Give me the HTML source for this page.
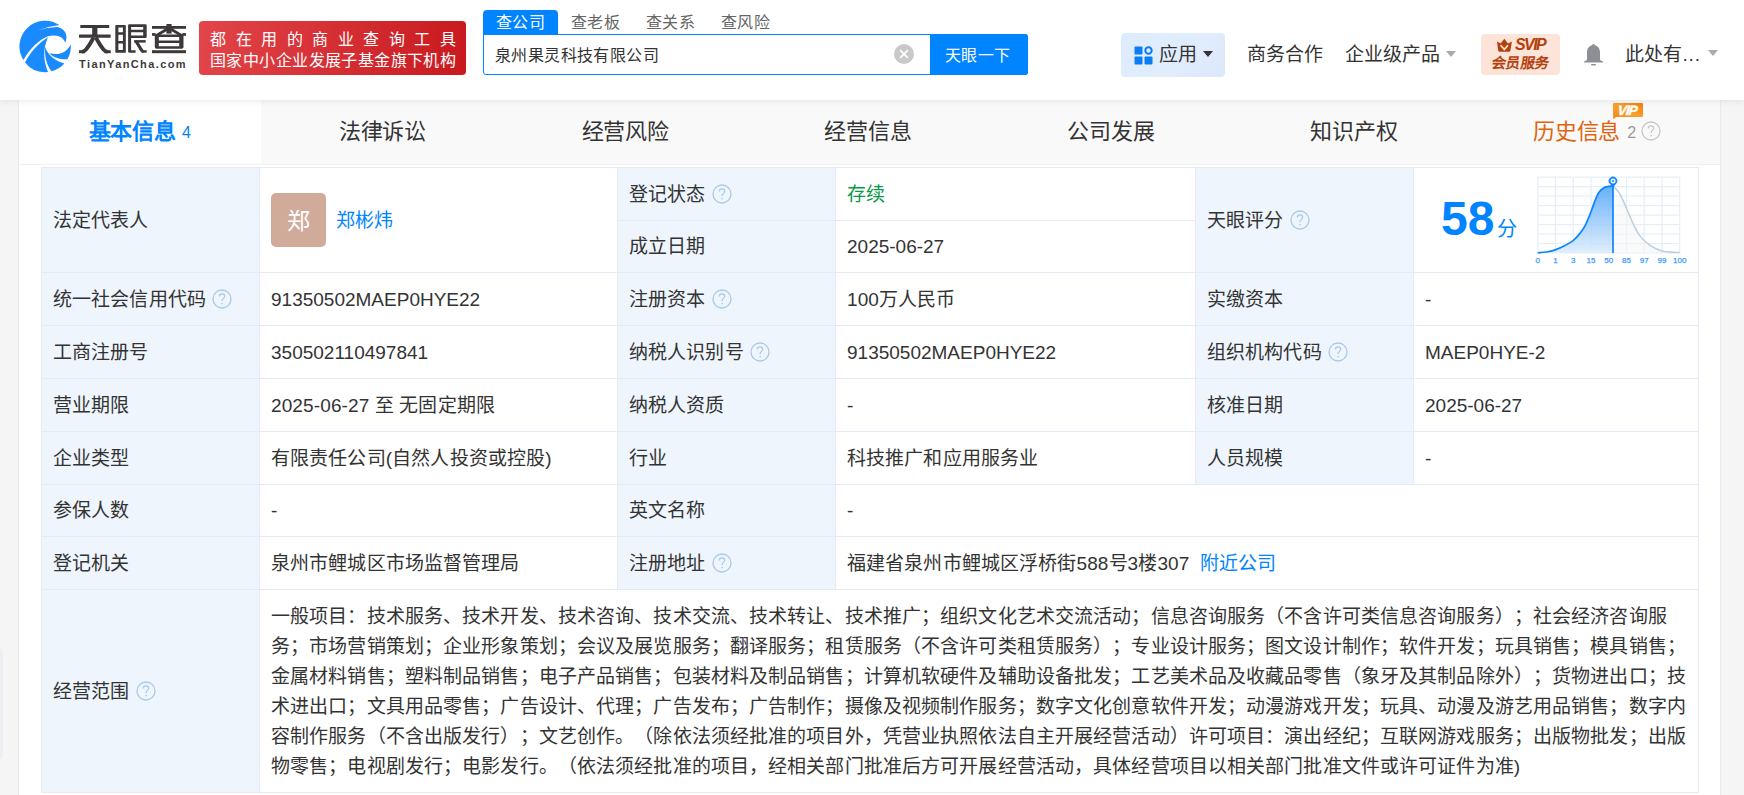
<!DOCTYPE html>
<html lang="zh-CN"><head><meta charset="utf-8">
<style>
*{box-sizing:border-box;margin:0;padding:0}
html,body{width:1744px;height:795px;overflow:hidden;text-spacing-trim:space-all;background:#f5f5f5;font-family:"Liberation Sans",sans-serif;color:#333}
.a{position:absolute;white-space:nowrap}
#hdr{position:absolute;left:0;top:0;width:1744px;height:100px;background:#fff;box-shadow:0 2px 6px rgba(0,0,0,.07);z-index:5}
</style></head><body>
<div id="hdr">
  <svg class="a" style="left:17px;top:18px" width="56" height="56" viewBox="0 0 795 795">
    <g fill="#1a8bff">
    <path d="M88.8,593.8 A365,365 0 0 1 601,98.3 Q430,118 280,180 Q420,132 570,128 C670,150 735,230 685,350 C665,280 580,225 440,258 C300,315 180,440 95,590 Z"/>
    <path d="M440,272 C300,360 190,480 114.5,630.4 A365,365 0 0 0 440.1,765.8 C380,620 360,450 440,272 Z"/>
    <path d="M400,410 C390,520 410,650 489.8,756.8 A365,365 0 0 0 672.7,645.6 C560,610 440,540 400,410 Z"/>
    <path d="M460,500 C520,560 600,590 715.7,586.3 A365,365 0 0 0 763.7,372.1 C720,470 620,540 460,500 Z"/>
    </g>
  </svg>
  <svg class="a" style="left:76px;top:20px" width="114" height="36" viewBox="76 20 114 36"><g fill="#3d3939"><rect x="80.3" y="25" width="28.9" height="3" rx=".3"/><rect x="92.2" y="27" width="5.2" height="8.5"/><rect x="79" y="34.6" width="31.7" height="3.2" rx=".3"/><rect x="79" y="50.2" width="6" height="3" /><rect x="104.6" y="50.2" width="6.1" height="3"/></g><g fill="none" stroke="#3d3939" stroke-width="3.8" stroke-linejoin="round"><path d="M93.6,37.5 C91.5,41.5 88.5,46.5 86,49.5 C84.8,51 83.8,51.7 82,51.7"/><path d="M95.9,37.5 C98,41.5 101,46.5 103.5,49.5 C104.7,51 105.7,51.7 107.5,51.7"/></g><g fill="#3d3939"><path fill-rule="evenodd" d="M116.2,25 L125,25 Q125.8,25 125.8,25.8 L125.8,52.7 L116.2,52.7 Q115.3,52.7 115.3,51.8 L115.3,25.9 Q115.3,25 116.2,25 Z M118.4,27.6 L118.4,32.2 L122.9,32.2 L122.9,27.6 Z M118.4,34.7 L118.4,41 L122.9,41 L122.9,34.7 Z M118.4,43.5 L118.4,50.1 L122.9,50.1 L122.9,43.5 Z"/><path fill-rule="evenodd" d="M129.2,24.3 L145.5,24.3 Q146.7,24.3 146.7,25.5 L146.7,36.7 Q146.7,37.9 145.5,37.9 L131.1,37.9 L131.1,50.2 L135.6,50.2 L135.6,52.7 L129.2,52.7 Q128.1,52.7 128.1,51.6 L128.1,25.4 Q128.1,24.3 129.2,24.3 Z M131.1,27 L131.1,29.8 L143.2,29.8 L143.2,27 Z M131.1,32.3 L131.1,35.6 L143.2,35.6 L143.2,32.3 Z"/><rect x="134.1" y="40.1" width="11.6" height="2.5"/><rect x="141.6" y="50.2" width="5.1" height="2.5"/></g><path d="M136.2,41.5 L140.5,48.5 C141.3,49.8 142,51.45 143.5,51.45" fill="none" stroke="#3d3939" stroke-width="3.3"/><g fill="#3d3939"><rect x="152" y="26" width="34" height="2.8"/><rect x="166.4" y="24" width="5.2" height="9.6"/><rect x="152" y="33.1" width="3.6" height="2.7"/><rect x="182.3" y="33.1" width="3.7" height="2.7"/><path d="M166.5,27.8 L168.6,29.9 L159.5,35.3 L154.2,35.3 Z"/><path d="M171.5,27.8 L169.4,29.9 L178.5,35.3 L183.8,35.3 Z"/><path fill-rule="evenodd" d="M154.8,34.6 L183.5,34.6 L183.5,47 Q183.5,48.7 181.8,48.7 L156.5,48.7 Q154.8,48.7 154.8,47 Z M158.8,36.9 L158.8,40.4 L179.2,40.4 L179.2,36.9 Z M158.8,42.9 L158.8,46.2 L179.2,46.2 L179.2,42.9 Z"/><rect x="152" y="50.2" width="34" height="3"/></g></svg>
  <div class="a" style="left:79px;top:57px;font-size:11px;line-height:14px;font-weight:bold;color:#3d3a3a;letter-spacing:1.4px">TianYanCha.com</div>
  <div class="a" style="left:199px;top:21px;width:267px;height:54px;border-radius:4px;background:linear-gradient(100deg,#e2454a,#c8191e)"></div>
  <div class="a" style="left:210px;top:28.5px;font-size:16px;line-height:22px;color:#fff;letter-spacing:9.5px">都在用的商业查询工具</div>
  <div class="a" style="left:210px;top:49.5px;font-size:16px;line-height:22px;color:#fff;letter-spacing:.42px">国家中小企业发展子基金旗下机构</div>

  <div class="a" style="left:483px;top:10px;width:75px;height:25px;background:#0084ff;border-radius:4px 4px 0 0"></div>
  <div class="a" style="left:496px;top:11px;font-size:16px;letter-spacing:.39px;line-height:24px;color:#fff">查公司</div>
  <div class="a" style="left:571px;top:11px;font-size:16px;letter-spacing:.39px;line-height:24px;color:#666">查老板</div>
  <div class="a" style="left:646px;top:11px;font-size:16px;letter-spacing:.39px;line-height:24px;color:#666">查关系</div>
  <div class="a" style="left:721px;top:11px;font-size:16px;letter-spacing:.39px;line-height:24px;color:#666">查风险</div>
  <div class="a" style="left:483px;top:34px;width:545px;height:41px;border:1px solid #0084ff;border-radius:0 3px 3px 3px;background:#fff"></div>
  <div class="a" style="left:495px;top:43px;font-size:16px;letter-spacing:.39px;line-height:26px;color:#333">泉州果灵科技有限公司</div>
  <div class="a" style="left:894px;top:44px;width:20px;height:20px;border-radius:50%;background:#c9c9c9"></div>
  <svg class="a" style="left:894px;top:44px" width="20" height="20" viewBox="0 0 20 20"><path d="M6.2,6.2 L13.8,13.8 M13.8,6.2 L6.2,13.8" stroke="#fff" stroke-width="1.8"/></svg>
  <div class="a" style="left:930px;top:34px;width:98px;height:41px;background:#0084ff;border-radius:0 3px 3px 0"></div>
  <div class="a" style="left:945px;top:43px;font-size:16px;letter-spacing:.39px;line-height:26px;color:#fff">天眼一下</div>

  <div class="a" style="left:1121px;top:33px;width:104px;height:44px;border-radius:4px;background:linear-gradient(135deg,#ddecfe,#e1edfd 60%,#dbe8fb)"></div>
  <svg class="a" style="left:1133.5px;top:46px" width="20" height="20" viewBox="0 0 20 20"><g fill="#0a7cf4"><rect x="0.5" y="0.5" width="8" height="8" rx="1"/><rect x="0.5" y="10.5" width="8" height="8" rx="1"/><rect x="10.5" y="10.5" width="8" height="8" rx="1"/></g><circle cx="14.5" cy="4.5" r="3.2" fill="none" stroke="#0a7cf4" stroke-width="2"/></svg>
  <div class="a" style="left:1159px;top:40px;font-size:19px;letter-spacing:.12px;line-height:30px;color:#333">应用</div>
  <div class="a" style="left:1203px;top:51px;width:0;height:0;border-left:5px solid transparent;border-right:5px solid transparent;border-top:6px solid #333"></div>
  <div class="a" style="left:1247px;top:40px;font-size:19px;letter-spacing:.12px;line-height:30px;color:#333">商务合作</div>
  <div class="a" style="left:1345px;top:40px;font-size:19px;letter-spacing:.12px;line-height:30px;color:#333">企业级产品</div>
  <div class="a" style="left:1446px;top:51px;width:0;height:0;border-left:5px solid transparent;border-right:5px solid transparent;border-top:6px solid #aaa"></div>

  <div class="a" style="left:1481px;top:34px;width:79px;height:41px;border-radius:4px;background:#fde4d9"></div>
  <div class="a" style="left:1490px;top:52px;font-size:14.4px;line-height:22px;font-weight:bold;color:#b3410e;transform:skewX(-9deg);transform-origin:0 100%;letter-spacing:.35px">会员服务</div>
  <div class="a" style="left:1515px;top:35px;font-size:16px;line-height:19px;font-weight:bold;font-style:italic;color:#b3410e;letter-spacing:-1.6px">SVIP</div>
  <svg class="a" style="left:1496px;top:38px" width="17" height="15" viewBox="0 0 17 15"><path d="M1,3.6 L4.6,5.6 L8.3,0.8 L12,5.6 L15.9,3.6 L14.4,12.6 Q14.2,13.8 13,13.8 L3.6,13.8 Q2.4,13.8 2.2,12.6 Z" fill="#b3410e"/><path d="M4.6,7.2 L8.3,11.4 L12,7.2" fill="none" stroke="#fde4da" stroke-width="1.7"/></svg>

  <svg class="a" style="left:1583px;top:43px" width="21" height="23" viewBox="0 0 21 23"><path d="M10.5,1 C11.3,1 11.8,1.6 11.8,2.3 C15.2,3 17,6 17,9.5 L17,16 C17,17 18,18 20,18.6 L20,19.6 L1,19.6 L1,18.6 C3,18 4,17 4,16 L4,9.5 C4,6 5.8,3 9.2,2.3 C9.2,1.6 9.7,1 10.5,1 Z" fill="#8c9096"/><rect x="8" y="21" width="5" height="1.6" rx=".8" fill="#8c9096"/></svg>
  <div class="a" style="left:1625px;top:40px;font-size:19px;letter-spacing:.12px;line-height:30px;color:#333">此处有<span style="letter-spacing:.9px">...</span></div>
  <div class="a" style="left:1708px;top:50px;width:0;height:0;border-left:5px solid transparent;border-right:5px solid transparent;border-top:6px solid #aaa"></div>
</div>

<div class="a" style="left:19px;top:100px;width:1701px;height:695px;background:#fff;box-shadow:-1px 0 1px rgba(0,0,0,.04),1px 0 1px rgba(0,0,0,.04)"></div>
<div class="a" style="left:-10px;top:647px;width:12.5px;height:113px;border-radius:6px;background:#eceef2"></div>
<div class="a" style="left:261px;top:100px;width:1459px;height:64px;background:#f9f9f9"></div>
<div class="a" style="left:19px;top:164px;width:1701px;height:1px;background:#f0f0f0"></div>
<div class="a" style="left:18.3px;top:100px;width:242.8px;height:64px;line-height:64px;text-align:center;font-size:22px;letter-spacing:-.15px;font-weight:bold;color:#0084ff"><span>基本信息</span><span style="font-size:16px;font-weight:normal;margin-left:6px;position:relative;top:-1px">4</span></div>
<div class="a" style="left:261.1px;top:100px;width:242.8px;height:64px;line-height:64px;text-align:center;font-size:22px;letter-spacing:-.15px;color:#333">法律诉讼</div>
<div class="a" style="left:503.9px;top:100px;width:242.8px;height:64px;line-height:64px;text-align:center;font-size:22px;letter-spacing:-.15px;color:#333">经营风险</div>
<div class="a" style="left:746.7px;top:100px;width:242.8px;height:64px;line-height:64px;text-align:center;font-size:22px;letter-spacing:-.15px;color:#333">经营信息</div>
<div class="a" style="left:989.5px;top:100px;width:242.8px;height:64px;line-height:64px;text-align:center;font-size:22px;letter-spacing:-.15px;color:#333">公司发展</div>
<div class="a" style="left:1232.3px;top:100px;width:242.8px;height:64px;line-height:64px;text-align:center;font-size:22px;letter-spacing:-.15px;color:#333">知识产权</div>
<div class="a" style="left:1475.1px;top:100px;width:242.8px;height:64px;line-height:64px;text-align:center;font-size:22px;letter-spacing:-.15px;color:#e0640f"><span style="margin-left:4px">历史信息</span><span style="font-size:16px;color:#999;margin-left:7px;position:relative;top:-1px">2</span><span style="display:inline-block;width:28px"></span></div>
<svg class="a" style="left:1640.5px;top:120.5px" width="20" height="20" viewBox="0 0 20 20"><circle cx="10" cy="10" r="9" fill="none" stroke="#c3c7cc" stroke-width="1.3"/><path d="M7.3,7.6 C7.3,5.9 8.5,4.9 10,4.9 C11.6,4.9 12.7,5.9 12.7,7.3 C12.7,9.3 10.1,9.4 10.1,11.6 L10.1,12.3" fill="none" stroke="#c3c7cc" stroke-width="1.2"/><rect x="9.4" y="14" width="1.4" height="1.3" fill="#c3c7cc"/></svg>
<svg class="a" style="left:1613px;top:103px" width="31" height="17" viewBox="0 0 31 17"><defs><linearGradient id="vg" x1="0" y1="1" x2="1" y2="0"><stop offset="0" stop-color="#f28613"/><stop offset=".5" stop-color="#f9a02e"/><stop offset="1" stop-color="#f57d0c"/></linearGradient></defs><path d="M1,0 L29,0 Q30,0 30,1 L30,13 Q30,14 29,14 L3.3,14 L0.2,16.2 L0,1 Q0,0 1,0 Z" fill="url(#vg)"/><text x="14.2" y="11.6" text-anchor="middle" font-family="Liberation Sans" font-size="13.5" font-weight="bold" font-style="italic" fill="#fff" stroke="#fff" stroke-width=".35" letter-spacing="-0.9" transform="skewX(-6)" transform-origin="15 8">VIP</text></svg>
<div class="a" style="left:41px;top:167px;width:218px;height:105px;background:#eef5fd;"></div>
<div class="a" style="left:617px;top:167px;width:218px;height:105px;background:#eef5fd;"></div>
<div class="a" style="left:1195px;top:167px;width:218px;height:105px;background:#eef5fd;"></div>
<div class="a" style="left:41px;top:272px;width:218px;height:53px;background:#eef5fd;"></div>
<div class="a" style="left:617px;top:272px;width:218px;height:53px;background:#eef5fd;"></div>
<div class="a" style="left:1195px;top:272px;width:218px;height:53px;background:#eef5fd;"></div>
<div class="a" style="left:41px;top:325px;width:218px;height:53px;background:#eef5fd;"></div>
<div class="a" style="left:617px;top:325px;width:218px;height:53px;background:#eef5fd;"></div>
<div class="a" style="left:1195px;top:325px;width:218px;height:53px;background:#eef5fd;"></div>
<div class="a" style="left:41px;top:378px;width:218px;height:53px;background:#eef5fd;"></div>
<div class="a" style="left:617px;top:378px;width:218px;height:53px;background:#eef5fd;"></div>
<div class="a" style="left:1195px;top:378px;width:218px;height:53px;background:#eef5fd;"></div>
<div class="a" style="left:41px;top:431px;width:218px;height:53px;background:#eef5fd;"></div>
<div class="a" style="left:617px;top:431px;width:218px;height:53px;background:#eef5fd;"></div>
<div class="a" style="left:1195px;top:431px;width:218px;height:53px;background:#eef5fd;"></div>
<div class="a" style="left:41px;top:484px;width:218px;height:52px;background:#eef5fd;"></div>
<div class="a" style="left:617px;top:484px;width:218px;height:52px;background:#eef5fd;"></div>
<div class="a" style="left:41px;top:536px;width:218px;height:53px;background:#eef5fd;"></div>
<div class="a" style="left:617px;top:536px;width:218px;height:53px;background:#eef5fd;"></div>
<div class="a" style="left:41px;top:589px;width:218px;height:203px;background:#eef5fd;"></div>
<div class="a" style="left:41px;top:167px;width:1658px;height:1px;background:#e3ecf5;"></div>
<div class="a" style="left:41px;top:272px;width:1658px;height:1px;background:#e3ecf5;"></div>
<div class="a" style="left:41px;top:325px;width:1658px;height:1px;background:#e3ecf5;"></div>
<div class="a" style="left:41px;top:378px;width:1658px;height:1px;background:#e3ecf5;"></div>
<div class="a" style="left:41px;top:431px;width:1658px;height:1px;background:#e3ecf5;"></div>
<div class="a" style="left:41px;top:484px;width:1658px;height:1px;background:#e3ecf5;"></div>
<div class="a" style="left:41px;top:536px;width:1658px;height:1px;background:#e3ecf5;"></div>
<div class="a" style="left:41px;top:589px;width:1658px;height:1px;background:#e3ecf5;"></div>
<div class="a" style="left:41px;top:792px;width:1658px;height:1px;background:#e3ecf5;"></div>
<div class="a" style="left:617px;top:220px;width:579px;height:1px;background:#e3ecf5;"></div>
<div class="a" style="left:41px;top:167px;width:1px;height:626px;background:#e3ecf5;"></div>
<div class="a" style="left:1698px;top:167px;width:1px;height:626px;background:#e3ecf5;"></div>
<div class="a" style="left:259px;top:167px;width:1px;height:626px;background:#e3ecf5;"></div>
<div class="a" style="left:617px;top:167px;width:1px;height:423px;background:#e3ecf5;"></div>
<div class="a" style="left:835px;top:167px;width:1px;height:423px;background:#e3ecf5;"></div>
<div class="a" style="left:1195px;top:167px;width:1px;height:318px;background:#e3ecf5;"></div>
<div class="a" style="left:1413px;top:167px;width:1px;height:318px;background:#e3ecf5;"></div>
<div class="a" style="left:53px;top:168px;height:105px;line-height:105px;font-size:19px;letter-spacing:.12px;color:#333">法定代表人</div>
<div class="a" style="left:271px;top:193px;width:55px;height:54px;background:#d1ab9a;border-radius:5px"></div>
<div class="a" style="left:271px;top:193px;width:55px;height:54px;line-height:56px;text-align:center;font-size:23px;color:#fff">郑</div>
<div class="a" style="left:336px;top:168px;height:105px;line-height:105px;font-size:19px;letter-spacing:.12px;color:#0084ff">郑彬炜</div>
<div class="a" style="left:629px;top:168px;height:53px;line-height:53px;font-size:19px;letter-spacing:.12px;color:#333">登记状态</div>
<svg class="a" style="left:712px;top:184px" width="20" height="20" viewBox="0 0 20 20"><circle cx="10" cy="10" r="9" fill="none" stroke="#aac9e8" stroke-width="1.3"/><path d="M7.3,7.6 C7.3,5.9 8.5,4.9 10,4.9 C11.6,4.9 12.7,5.9 12.7,7.3 C12.7,9.3 10.1,9.4 10.1,11.6 L10.1,12.3" fill="none" stroke="#aac9e8" stroke-width="1.2"/><rect x="9.4" y="14" width="1.4" height="1.3" fill="#aac9e8"/></svg>
<div class="a" style="left:847px;top:168px;height:53px;line-height:53px;font-size:19px;letter-spacing:.12px;color:#089a47">存续</div>
<div class="a" style="left:629px;top:221px;height:52px;line-height:52px;font-size:19px;letter-spacing:.12px;color:#333">成立日期</div>
<div class="a" style="left:847px;top:221px;height:52px;line-height:52px;font-size:19px;letter-spacing:0;color:#333">2025-06-27</div>
<div class="a" style="left:1207px;top:168px;height:105px;line-height:105px;font-size:19px;letter-spacing:.12px;color:#333">天眼评分</div>
<svg class="a" style="left:1290px;top:210px" width="20" height="20" viewBox="0 0 20 20"><circle cx="10" cy="10" r="9" fill="none" stroke="#aac9e8" stroke-width="1.3"/><path d="M7.3,7.6 C7.3,5.9 8.5,4.9 10,4.9 C11.6,4.9 12.7,5.9 12.7,7.3 C12.7,9.3 10.1,9.4 10.1,11.6 L10.1,12.3" fill="none" stroke="#aac9e8" stroke-width="1.2"/><rect x="9.4" y="14" width="1.4" height="1.3" fill="#aac9e8"/></svg>
<div class="a" style="left:53px;top:273px;height:53px;line-height:53px;font-size:19px;letter-spacing:.12px;color:#333">统一社会信用代码</div>
<svg class="a" style="left:212px;top:289px" width="20" height="20" viewBox="0 0 20 20"><circle cx="10" cy="10" r="9" fill="none" stroke="#aac9e8" stroke-width="1.3"/><path d="M7.3,7.6 C7.3,5.9 8.5,4.9 10,4.9 C11.6,4.9 12.7,5.9 12.7,7.3 C12.7,9.3 10.1,9.4 10.1,11.6 L10.1,12.3" fill="none" stroke="#aac9e8" stroke-width="1.2"/><rect x="9.4" y="14" width="1.4" height="1.3" fill="#aac9e8"/></svg>
<div class="a" style="left:271px;top:273px;height:53px;line-height:53px;font-size:19px;letter-spacing:0;color:#333">91350502MAEP0HYE22</div>
<div class="a" style="left:629px;top:273px;height:53px;line-height:53px;font-size:19px;letter-spacing:.12px;color:#333">注册资本</div>
<svg class="a" style="left:712px;top:289px" width="20" height="20" viewBox="0 0 20 20"><circle cx="10" cy="10" r="9" fill="none" stroke="#aac9e8" stroke-width="1.3"/><path d="M7.3,7.6 C7.3,5.9 8.5,4.9 10,4.9 C11.6,4.9 12.7,5.9 12.7,7.3 C12.7,9.3 10.1,9.4 10.1,11.6 L10.1,12.3" fill="none" stroke="#aac9e8" stroke-width="1.2"/><rect x="9.4" y="14" width="1.4" height="1.3" fill="#aac9e8"/></svg>
<div class="a" style="left:847px;top:273px;height:53px;line-height:53px;font-size:19px;letter-spacing:.12px;color:#333">100万人民币</div>
<div class="a" style="left:1207px;top:273px;height:53px;line-height:53px;font-size:19px;letter-spacing:.12px;color:#333">实缴资本</div>
<div class="a" style="left:1425px;top:273px;height:53px;line-height:53px;font-size:19px;letter-spacing:0;color:#333">-</div>
<div class="a" style="left:53px;top:326px;height:53px;line-height:53px;font-size:19px;letter-spacing:.12px;color:#333">工商注册号</div>
<div class="a" style="left:271px;top:326px;height:53px;line-height:53px;font-size:19px;letter-spacing:0;color:#333">350502110497841</div>
<div class="a" style="left:629px;top:326px;height:53px;line-height:53px;font-size:19px;letter-spacing:.12px;color:#333">纳税人识别号</div>
<svg class="a" style="left:750px;top:342px" width="20" height="20" viewBox="0 0 20 20"><circle cx="10" cy="10" r="9" fill="none" stroke="#aac9e8" stroke-width="1.3"/><path d="M7.3,7.6 C7.3,5.9 8.5,4.9 10,4.9 C11.6,4.9 12.7,5.9 12.7,7.3 C12.7,9.3 10.1,9.4 10.1,11.6 L10.1,12.3" fill="none" stroke="#aac9e8" stroke-width="1.2"/><rect x="9.4" y="14" width="1.4" height="1.3" fill="#aac9e8"/></svg>
<div class="a" style="left:847px;top:326px;height:53px;line-height:53px;font-size:19px;letter-spacing:0;color:#333">91350502MAEP0HYE22</div>
<div class="a" style="left:1207px;top:326px;height:53px;line-height:53px;font-size:19px;letter-spacing:.12px;color:#333">组织机构代码</div>
<svg class="a" style="left:1328px;top:342px" width="20" height="20" viewBox="0 0 20 20"><circle cx="10" cy="10" r="9" fill="none" stroke="#aac9e8" stroke-width="1.3"/><path d="M7.3,7.6 C7.3,5.9 8.5,4.9 10,4.9 C11.6,4.9 12.7,5.9 12.7,7.3 C12.7,9.3 10.1,9.4 10.1,11.6 L10.1,12.3" fill="none" stroke="#aac9e8" stroke-width="1.2"/><rect x="9.4" y="14" width="1.4" height="1.3" fill="#aac9e8"/></svg>
<div class="a" style="left:1425px;top:326px;height:53px;line-height:53px;font-size:19px;letter-spacing:0;color:#333">MAEP0HYE-2</div>
<div class="a" style="left:53px;top:379px;height:53px;line-height:53px;font-size:19px;letter-spacing:.12px;color:#333">营业期限</div>
<div class="a" style="left:271px;top:379px;height:53px;line-height:53px;font-size:19px;letter-spacing:.12px;color:#333">2025-06-27 至 无固定期限</div>
<div class="a" style="left:629px;top:379px;height:53px;line-height:53px;font-size:19px;letter-spacing:.12px;color:#333">纳税人资质</div>
<div class="a" style="left:847px;top:379px;height:53px;line-height:53px;font-size:19px;letter-spacing:0;color:#333">-</div>
<div class="a" style="left:1207px;top:379px;height:53px;line-height:53px;font-size:19px;letter-spacing:.12px;color:#333">核准日期</div>
<div class="a" style="left:1425px;top:379px;height:53px;line-height:53px;font-size:19px;letter-spacing:0;color:#333">2025-06-27</div>
<div class="a" style="left:53px;top:432px;height:53px;line-height:53px;font-size:19px;letter-spacing:.12px;color:#333">企业类型</div>
<div class="a" style="left:271px;top:432px;height:53px;line-height:53px;font-size:19px;letter-spacing:.12px;color:#333">有限责任公司(自然人投资或控股)</div>
<div class="a" style="left:629px;top:432px;height:53px;line-height:53px;font-size:19px;letter-spacing:.12px;color:#333">行业</div>
<div class="a" style="left:847px;top:432px;height:53px;line-height:53px;font-size:19px;letter-spacing:.12px;color:#333">科技推广和应用服务业</div>
<div class="a" style="left:1207px;top:432px;height:53px;line-height:53px;font-size:19px;letter-spacing:.12px;color:#333">人员规模</div>
<div class="a" style="left:1425px;top:432px;height:53px;line-height:53px;font-size:19px;letter-spacing:0;color:#333">-</div>
<div class="a" style="left:53px;top:485px;height:52px;line-height:52px;font-size:19px;letter-spacing:.12px;color:#333">参保人数</div>
<div class="a" style="left:271px;top:485px;height:52px;line-height:52px;font-size:19px;letter-spacing:0;color:#333">-</div>
<div class="a" style="left:629px;top:485px;height:52px;line-height:52px;font-size:19px;letter-spacing:.12px;color:#333">英文名称</div>
<div class="a" style="left:847px;top:485px;height:52px;line-height:52px;font-size:19px;letter-spacing:0;color:#333">-</div>
<div class="a" style="left:53px;top:537px;height:53px;line-height:53px;font-size:19px;letter-spacing:.12px;color:#333">登记机关</div>
<div class="a" style="left:271px;top:537px;height:53px;line-height:53px;font-size:19px;letter-spacing:.12px;color:#333">泉州市鲤城区市场监督管理局</div>
<div class="a" style="left:629px;top:537px;height:53px;line-height:53px;font-size:19px;letter-spacing:.12px;color:#333">注册地址</div>
<svg class="a" style="left:712px;top:553px" width="20" height="20" viewBox="0 0 20 20"><circle cx="10" cy="10" r="9" fill="none" stroke="#aac9e8" stroke-width="1.3"/><path d="M7.3,7.6 C7.3,5.9 8.5,4.9 10,4.9 C11.6,4.9 12.7,5.9 12.7,7.3 C12.7,9.3 10.1,9.4 10.1,11.6 L10.1,12.3" fill="none" stroke="#aac9e8" stroke-width="1.2"/><rect x="9.4" y="14" width="1.4" height="1.3" fill="#aac9e8"/></svg>
<div class="a" style="left:847px;top:537px;height:53px;line-height:53px;font-size:19px;letter-spacing:.12px;color:#333">福建省泉州市鲤城区浮桥街588号3楼307<span style="color:#0084ff;margin-left:10px">附近公司</span></div>
<div class="a" style="left:53px;top:590px;height:203px;line-height:203px;font-size:19px;letter-spacing:.12px;color:#333">经营范围</div>
<svg class="a" style="left:136px;top:681px" width="20" height="20" viewBox="0 0 20 20"><circle cx="10" cy="10" r="9" fill="none" stroke="#aac9e8" stroke-width="1.3"/><path d="M7.3,7.6 C7.3,5.9 8.5,4.9 10,4.9 C11.6,4.9 12.7,5.9 12.7,7.3 C12.7,9.3 10.1,9.4 10.1,11.6 L10.1,12.3" fill="none" stroke="#aac9e8" stroke-width="1.2"/><rect x="9.4" y="14" width="1.4" height="1.3" fill="#aac9e8"/></svg>
<div class="a" style="left:271px;top:602px;line-height:30px;font-size:19px;letter-spacing:.12px;color:#333">一般项目：技术服务、技术开发、技术咨询、技术交流、技术转让、技术推广；组织文化艺术交流活动；信息咨询服务（不含许可类信息咨询服务）；社会经济咨询服</div>
<div class="a" style="left:271px;top:632px;line-height:30px;font-size:19px;letter-spacing:.12px;color:#333">务；市场营销策划；企业形象策划；会议及展览服务；翻译服务；租赁服务（不含许可类租赁服务）；专业设计服务；图文设计制作；软件开发；玩具销售；模具销售；</div>
<div class="a" style="left:271px;top:662px;line-height:30px;font-size:19px;letter-spacing:.12px;color:#333">金属材料销售；塑料制品销售；电子产品销售；包装材料及制品销售；计算机软硬件及辅助设备批发；工艺美术品及收藏品零售（象牙及其制品除外）；货物进出口；技</div>
<div class="a" style="left:271px;top:692px;line-height:30px;font-size:19px;letter-spacing:.12px;color:#333">术进出口；文具用品零售；广告设计、代理；广告发布；广告制作；摄像及视频制作服务；数字文化创意软件开发；动漫游戏开发；玩具、动漫及游艺用品销售；数字内</div>
<div class="a" style="left:271px;top:722px;line-height:30px;font-size:19px;letter-spacing:.12px;color:#333">容制作服务（不含出版发行）；文艺创作。（除依法须经批准的项目外，凭营业执照依法自主开展经营活动）许可项目：演出经纪；互联网游戏服务；出版物批发；出版</div>
<div class="a" style="left:271px;top:752px;line-height:30px;font-size:19px;letter-spacing:.12px;color:#333">物零售；电视剧发行；电影发行。（依法须经批准的项目，经相关部门批准后方可开展经营活动，具体经营项目以相关部门批准文件或许可证件为准)</div>
<div class="a" style="left:1441px;top:191px;font-size:48px;line-height:56px;font-weight:bold;color:#0084ff">58</div>
<div class="a" style="left:1497px;top:215px;font-size:20px;line-height:28px;color:#0084ff">分</div>
<svg class="a" style="left:1530px;top:170px" width="160" height="100" viewBox="1530 170 160 100">
<defs><linearGradient id="cg" x1="0" y1="0" x2="0" y2="1"><stop offset="0" stop-color="#4ea4fb"/><stop offset="1" stop-color="#dcecfc"/></linearGradient></defs>
<path d="M1537.80,177.2 L1537.80,253.0 M1555.54,177.2 L1555.54,253.0 M1573.28,177.2 L1573.28,253.0 M1591.01,177.2 L1591.01,253.0 M1608.75,177.2 L1608.75,253.0 M1626.49,177.2 L1626.49,253.0 M1644.22,177.2 L1644.22,253.0 M1661.96,177.2 L1661.96,253.0 M1679.70,177.2 L1679.70,253.0 M1537.8,177.20 L1679.7,177.20 M1537.8,186.67 L1679.7,186.67 M1537.8,196.15 L1679.7,196.15 M1537.8,205.62 L1679.7,205.62 M1537.8,215.10 L1679.7,215.10 M1537.8,224.57 L1679.7,224.57 M1537.8,234.05 L1679.7,234.05 M1537.8,243.53 L1679.7,243.53 M1537.8,253.00 L1679.7,253.00" stroke="#e6eff9" stroke-width="1.2" fill="none"/>
<path d="M1613.00,186.30 C1613.22,186.42 1613.25,185.87 1614.30,187.00 C1615.35,188.13 1617.63,190.40 1619.30,193.10 C1620.97,195.80 1622.62,199.52 1624.30,203.20 C1625.98,206.88 1627.72,211.35 1629.40,215.20 C1631.08,219.05 1632.57,222.77 1634.40,226.30 C1636.23,229.83 1637.80,233.22 1640.40,236.40 C1643.00,239.58 1646.40,242.97 1650.00,245.40 C1653.60,247.83 1657.05,249.80 1662.00,251.00 C1666.95,252.20 1676.75,252.33 1679.70,252.60 L1679.7,253.0 L1613.0,253.0 Z" fill="#f6f6f6" fill-opacity=".5"/>
<path d="M1613.00,186.30 C1613.22,186.42 1613.25,185.87 1614.30,187.00 C1615.35,188.13 1617.63,190.40 1619.30,193.10 C1620.97,195.80 1622.62,199.52 1624.30,203.20 C1625.98,206.88 1627.72,211.35 1629.40,215.20 C1631.08,219.05 1632.57,222.77 1634.40,226.30 C1636.23,229.83 1637.80,233.22 1640.40,236.40 C1643.00,239.58 1646.40,242.97 1650.00,245.40 C1653.60,247.83 1657.05,249.80 1662.00,251.00 C1666.95,252.20 1676.75,252.33 1679.70,252.60" fill="none" stroke="#bccfe0" stroke-width="1.5"/>
<path d="M1537.80,252.80 C1539.23,252.67 1543.50,252.48 1546.40,252.00 C1549.30,251.52 1552.27,250.88 1555.20,249.90 C1558.13,248.92 1560.97,247.68 1564.00,246.10 C1567.03,244.52 1570.68,242.60 1573.40,240.40 C1576.12,238.20 1578.32,235.42 1580.30,232.90 C1582.28,230.38 1583.50,228.87 1585.30,225.30 C1587.10,221.73 1589.45,215.68 1591.10,211.50 C1592.75,207.32 1593.85,203.43 1595.20,200.20 C1596.55,196.97 1597.70,194.20 1599.20,192.10 C1600.70,190.00 1602.53,188.57 1604.20,187.60 C1605.87,186.63 1607.73,186.52 1609.20,186.30 C1610.67,186.08 1612.37,186.30 1613.00,186.30 L1613.0,253.0 Z" fill="url(#cg)" fill-opacity=".85"/>
<path d="M1537.80,252.80 C1539.23,252.67 1543.50,252.48 1546.40,252.00 C1549.30,251.52 1552.27,250.88 1555.20,249.90 C1558.13,248.92 1560.97,247.68 1564.00,246.10 C1567.03,244.52 1570.68,242.60 1573.40,240.40 C1576.12,238.20 1578.32,235.42 1580.30,232.90 C1582.28,230.38 1583.50,228.87 1585.30,225.30 C1587.10,221.73 1589.45,215.68 1591.10,211.50 C1592.75,207.32 1593.85,203.43 1595.20,200.20 C1596.55,196.97 1597.70,194.20 1599.20,192.10 C1600.70,190.00 1602.53,188.57 1604.20,187.60 C1605.87,186.63 1607.73,186.52 1609.20,186.30 C1610.67,186.08 1612.37,186.30 1613.00,186.30" fill="none" stroke="#0a84ff" stroke-width="1.7"/>
<line x1="1613.0" y1="184" x2="1613.0" y2="253.0" stroke="#0a84ff" stroke-width="1.7"/>
<path d="M1609.7,183.6 A4.2,4.2 0 1 1 1616.3,183.6 L1613.0,187.5 Z" fill="#0a84ff"/>
<circle cx="1613.0" cy="181.0" r="2.5" fill="#fff"/><circle cx="1613.0" cy="181.0" r="1.1" fill="#0a84ff"/>
<text x="1537.80" y="263.3" text-anchor="middle" font-family="Liberation Sans" font-size="8" fill="#3d9bff" stroke="#3d9bff" stroke-width=".25">0</text>
<text x="1555.54" y="263.3" text-anchor="middle" font-family="Liberation Sans" font-size="8" fill="#3d9bff" stroke="#3d9bff" stroke-width=".25">1</text>
<text x="1573.28" y="263.3" text-anchor="middle" font-family="Liberation Sans" font-size="8" fill="#3d9bff" stroke="#3d9bff" stroke-width=".25">3</text>
<text x="1591.01" y="263.3" text-anchor="middle" font-family="Liberation Sans" font-size="8" fill="#3d9bff" stroke="#3d9bff" stroke-width=".25">15</text>
<text x="1608.75" y="263.3" text-anchor="middle" font-family="Liberation Sans" font-size="8" fill="#3d9bff" stroke="#3d9bff" stroke-width=".25">50</text>
<text x="1626.49" y="263.3" text-anchor="middle" font-family="Liberation Sans" font-size="8" fill="#3d9bff" stroke="#3d9bff" stroke-width=".25">85</text>
<text x="1644.22" y="263.3" text-anchor="middle" font-family="Liberation Sans" font-size="8" fill="#3d9bff" stroke="#3d9bff" stroke-width=".25">97</text>
<text x="1661.96" y="263.3" text-anchor="middle" font-family="Liberation Sans" font-size="8" fill="#3d9bff" stroke="#3d9bff" stroke-width=".25">99</text>
<text x="1679.70" y="263.3" text-anchor="middle" font-family="Liberation Sans" font-size="8" fill="#3d9bff" stroke="#3d9bff" stroke-width=".25">100</text>
</svg>
</body></html>
